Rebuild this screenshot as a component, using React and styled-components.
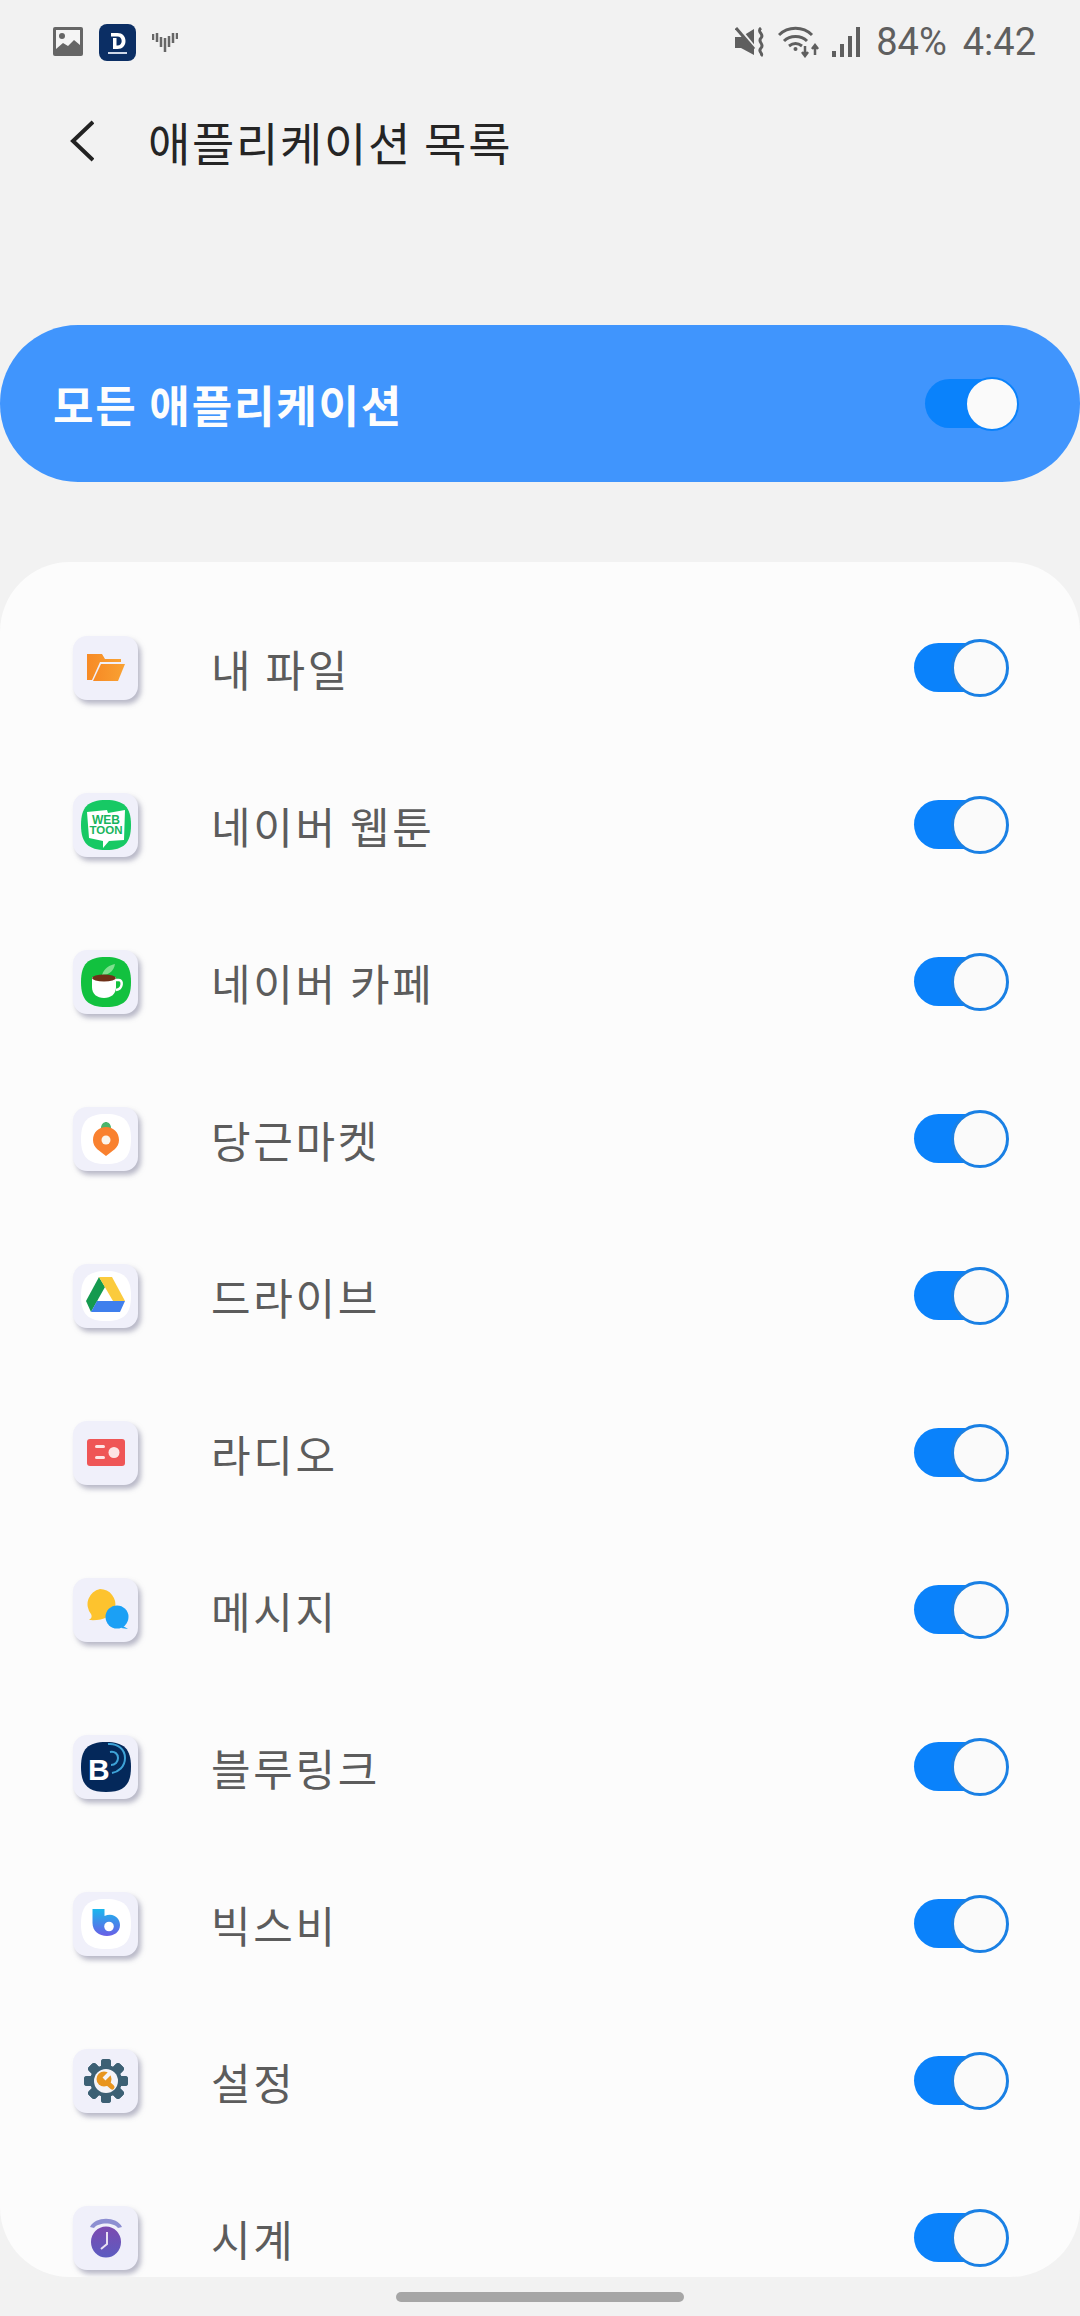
import styled, { createGlobalStyle } from 'styled-components';

const GlobalStyle = createGlobalStyle`
  html, body {
    margin: 0;
    padding: 0;
    background: #f2f2f2;
  }
  * {
    box-sizing: border-box;
  }
`;

const Page = styled.div`
  width: 1080px;
  height: 2316px;
  overflow: hidden;
  background: #f2f2f2;
  font-family: 'Noto Sans CJK KR', 'Noto Sans', sans-serif;
`;

const StatusBar = styled.div`
  height: 84px;
  padding: 0 44px 0 53px;
  display: flex;
  align-items: center;
  justify-content: space-between;
`;

const StatusGroup = styled.div`
  display: flex;
  align-items: center;
  gap: ${(p) => p.$gap || 12}px;
`;

const StatusText = styled.span`
  font-family: Roboto, 'Liberation Sans', sans-serif;
  font-size: 38px;
  line-height: 42px;
  color: #5f5f5f;
  margin-left: ${(p) => p.$left || 0}px;
`;

const Header = styled.div`
  height: 114px;
  padding-left: 70px;
  display: flex;
  align-items: center;
  gap: 54px;
`;

const Title = styled.h1`
  margin: 0;
  font-size: 46px;
  font-weight: 400;
  letter-spacing: 1.7px;
  color: #252525;
`;

const Banner = styled.div`
  margin-top: 127px;
  height: 157px;
  border-radius: 78px;
  background: #4095fd;
  padding: 0 61px 0 53px;
  display: flex;
  align-items: center;
  justify-content: space-between;
`;

const BannerLabel = styled.span`
  font-size: 44px;
  font-weight: 700;
  letter-spacing: 1.8px;
  color: #fdfdfd;
`;

const Card = styled.div`
  margin-top: 80px;
  height: 1715px;
  padding-top: 27px;
  border-radius: 70px;
  background: #fcfcfc;
  overflow: hidden;
`;

const Row = styled.div`
  height: 157px;
  padding: 0 71px 0 73px;
  display: flex;
  align-items: center;
`;

const IconTile = styled.div`
  width: 65px;
  height: 64px;
  flex: none;
  border-radius: 14px;
  background: #f0f0fa;
  box-shadow: 3px 4px 5px rgba(120, 120, 150, 0.5);
  display: flex;
  align-items: center;
  justify-content: center;
`;

const RowLabel = styled.span`
  margin-left: 73px;
  flex: 1;
  font-size: 43px;
  letter-spacing: 2.7px;
  color: #5c5c5c;
`;

const Track = styled.div`
  position: relative;
  width: ${(p) => (p.$small ? 91 : 86)}px;
  height: 49px;
  margin-right: ${(p) => (p.$small ? 3 : 9)}px;
  border-radius: 25px;
  background: #0a82fb;
`;

const Thumb = styled.div`
  position: absolute;
  top: 50%;
  right: ${(p) => (p.$small ? -3 : -9)}px;
  width: ${(p) => (p.$small ? 54 : 58)}px;
  height: ${(p) => (p.$small ? 54 : 58)}px;
  transform: translateY(-50%);
  border-radius: 50%;
  border: ${(p) => (p.$small ? 2 : 3)}px solid ${(p) => (p.$small ? '#0a82fb' : '#1a80e4')};
  background: #fafafa;
`;

const Toggle = ({ small }) => (
  <Track $small={small}>
    <Thumb $small={small} />
  </Track>
);

const HomeBar = styled.div`
  width: 288px;
  height: 10px;
  margin: 15px auto 0;
  border-radius: 5px;
  background: #a6a6a6;
`;

const Squircle = ({ fill, children }) => (
  <svg width="50" height="50" viewBox="0 0 50 50">
    <path d="M25 0C43 0 50 7 50 25S43 50 25 50 0 43 0 25 7 0 25 0Z" fill={fill} />
    {children}
  </svg>
);

const ImageIcon = () => (
  <svg width="30" height="30" viewBox="0 0 30 30">
    <rect x="0" y="0" width="30" height="29" rx="2" fill="#666" />
    <rect x="3" y="3" width="24" height="23" fill="#f5f5f5" />
    <circle cx="9" cy="9" r="3" fill="#666" />
    <path d="M3 22l7-6 5 3 6-6 6 5v9H3Z" fill="#666" />
  </svg>
);

const DIcon = () => (
  <svg width="37" height="37" viewBox="0 0 37 37">
    <rect width="37" height="37" rx="8" fill="#0b2e64" />
    <path
      d="M12 9h6.500c5 0 8 3.500 8 8s-3 8-8 8H14V14h3.500v7.500h1c2.500 0 4.200-2 4.200-4.500s-1.700-4.500-4.200-4.500H12Z"
      fill="#fff"
    />
    <rect x="9" y="28" width="19" height="2" fill="#cfd8e8" />
  </svg>
);

const WaveIcon = () => (
  <svg width="26" height="22" viewBox="0 0 26 22" fill="none" stroke="#666" strokeWidth="2.500">
    <path d="M1 3v6M5 2v9M9 6v10M13 7v14M17 5v11M21 2v10M25 2v6" />
  </svg>
);

const MuteIcon = () => (
  <svg width="31" height="30" viewBox="0 0 31 30">
    <path d="M0 10h6l13-8v26L6 21H0Z" fill="#5f5f5f" />
    <path d="M3 0l17 21" stroke="#f2f2f2" strokeWidth="3" />
    <path d="M1 1l18 21" stroke="#5f5f5f" strokeWidth="3" />
    <path d="M26 1c-5 4 4 6 0 10s4 6 0 10 3 5 0 8" fill="none" stroke="#5f5f5f" strokeWidth="3" />
  </svg>
);

const WifiIcon = () => (
  <svg width="42" height="32" viewBox="0 0 42 32" fill="none" stroke="#5f5f5f" strokeWidth="3">
    <path d="M1 9C10 0 25 0 34 9" />
    <path d="M6 15c6-6 17-6 23 0" />
    <path d="M11 20c4-3 9-3 13 0" />
    <circle cx="17.500" cy="23" r="2" fill="#5f5f5f" stroke="none" />
    <path d="M27 20v9M24 26l3 4 3-4M37 29v-9M34 23l3-4 3 4" strokeWidth="2.500" />
  </svg>
);

const SignalIcon = () => (
  <svg width="28" height="30" viewBox="0 0 28 30" fill="#5f5f5f">
    <rect x="0" y="24" width="4" height="6" />
    <rect x="8" y="17" width="4" height="13" />
    <rect x="16" y="9" width="4" height="21" />
    <rect x="24" y="0" width="4" height="30" />
  </svg>
);

const BackIcon = () => (
  <svg width="24" height="42" viewBox="0 0 24 42" fill="none" stroke="#222" strokeWidth="4">
    <path d="M23 2L3 21l20 19" />
  </svg>
);

const FolderIcon = () => (
  <svg width="40" height="30" viewBox="0 0 40 30">
    <defs>
      <linearGradient id="folderGrad" x1="0" y1="0" x2="1" y2="0">
        <stop offset="0" stopColor="#f78a25" />
        <stop offset="1" stopColor="#f9a233" />
      </linearGradient>
    </defs>
    <path d="M1 1h15l3 5h16v3H14L6 27H1Z" fill="url(#folderGrad)" />
    <path d="M15 11h24l-7 17H7Z" fill="url(#folderGrad)" />
  </svg>
);

const WebtoonIcon = () => (
  <Squircle fill="#17c964">
    <path d="M6 12l20-2 1 3 17-3-1 30-15 1-6 7v-7L8 38Z" fill="#fff" />
    <text x="25" y="24" textAnchor="middle" fontFamily="Liberation Sans" fontWeight="700" fontSize="12" fill="#17b45c">WEB</text>
    <text x="25" y="34" textAnchor="middle" fontFamily="Liberation Sans" fontWeight="700" fontSize="11.500" fill="#17b45c">TOON</text>
  </Squircle>
);

const CafeIcon = () => (
  <Squircle fill="#12c13f">
    <path d="M21 18c2-7 8-10 13-11-1 6-5 11-13 11Z" fill="#7fe08f" />
    <path d="M11 20h24v10c0 7-5 11-12 11S11 37 11 30Z" fill="#fff" />
    <ellipse cx="23" cy="21" rx="12" ry="3.500" fill="#6e3018" />
    <path d="M35 23h3c4 0 4 9-3 10" fill="none" stroke="#fff" strokeWidth="2.500" />
  </Squircle>
);

const CarrotIcon = () => (
  <Squircle fill="#ffffff">
    <path d="M20 14c0-4 3-6 5-6 2 0 5 2 5 6Z" fill="#4bb56b" />
    <path d="M25 13c7.500 0 13 5.500 13 13 0 8-7 11-13 16-6-5-13-8-13-16 0-7.500 5.500-13 13-13Z" fill="#f9812f" />
    <circle cx="25" cy="26" r="4.500" fill="#fbf5ec" />
  </Squircle>
);

const DriveIcon = () => (
  <Squircle fill="#ffffff">
    <path d="M18 6L5 30l5 11 14-25Z" fill="#159a4f" />
    <path d="M18 6h13l13 24H32Z" fill="#fbcb3d" />
    <path d="M16 30h28l-5 11H10Z" fill="#3f7fed" />
  </Squircle>
);

const RadioIcon = () => (
  <svg width="38" height="28" viewBox="0 0 38 28">
    <rect width="38" height="27" rx="3" fill="#ef5656" />
    <rect x="8" y="6" width="10" height="3" rx="1.500" fill="#fde5e5" />
    <rect x="8" y="17" width="10" height="3" rx="1.500" fill="#fde5e5" />
    <circle cx="27" cy="13.500" r="5.500" fill="#fde5e5" />
  </svg>
);

const MessageIcon = () => (
  <svg width="46" height="44" viewBox="0 0 46 44">
    <path d="M17 1a15.500 15.500 0 0 1 15 19c-3 9-13 13-26 12 3-2 3-4 2-6A15.500 15.500 0 0 1 17 1Z" fill="#fdc32e" />
    <circle cx="34" cy="29" r="11.500" fill="#1ba0f5" />
    <path d="M40 38l5 3-7-1Z" fill="#1ba0f5" />
  </svg>
);

const BluelinkIcon = () => (
  <Squircle fill="#04285a">
    <text x="7" y="38" fontFamily="Liberation Sans" fontWeight="700" fontSize="30" fill="#fff">B</text>
    <path d="M29 10c5-1 8 2 8 6s-3 7-7 7" fill="none" stroke="#3ea3d8" strokeWidth="2" />
    <path d="M27 2c9-1 17 5 17 14s-7 14-13 15" fill="none" stroke="#3ea3d8" strokeWidth="2" />
  </Squircle>
);

const BixbyIcon = () => (
  <Squircle fill="#ffffff">
    <defs>
      <linearGradient id="bixbyGrad" x1="0" y1="0" x2="0" y2="1">
        <stop offset="0" stopColor="#1ab8ee" />
        <stop offset="1" stopColor="#6a5ee6" />
      </linearGradient>
    </defs>
    <path d="M11.500 10h12v7C33 13 39 20 39 26c0 7-6 11-13 11-8 0-14.500-5-14.500-13Z" fill="url(#bixbyGrad)" />
    <circle cx="28" cy="27.500" r="4.800" fill="#fff" />
  </Squircle>
);

const GearIcon = () => (
  <svg width="44" height="44" viewBox="0 0 44 44">
    <g fill="#3c6074">
      {[0, 45, 90, 135, 180, 225, 270, 315].map((deg) => (
        <rect key={deg} x="17" y="0" width="10" height="44" rx="3" transform={`rotate(${deg} 22 22)`} />
      ))}
    </g>
    <circle cx="22" cy="22" r="16" fill="#3c6074" />
    <circle cx="22" cy="22" r="12" fill="#f4f4f8" />
    <circle cx="20" cy="20" r="7.500" fill="#e8961f" />
    <path d="M19 20l9 8" stroke="#e8961f" strokeWidth="5" strokeLinecap="round" />
    <path d="M20 20l7-7" stroke="#f4f4f8" strokeWidth="4" />
  </svg>
);

const ClockIcon = () => (
  <svg width="34" height="40" viewBox="0 0 34 40">
    <defs>
      <linearGradient id="clockGrad" x1="0" y1="0" x2="0" y2="1">
        <stop offset="0" stopColor="#7c4ab0" />
        <stop offset="1" stopColor="#5c5cc0" />
      </linearGradient>
    </defs>
    <path d="M1 9C6-2 28-2 33 9l-4 1C25 4 9 4 5 10Z" fill="#8d8fd2" />
    <ellipse cx="17" cy="24" rx="15" ry="15.500" fill="url(#clockGrad)" />
    <path d="M18 14v12l-6 5" fill="none" stroke="#e8dff2" strokeWidth="2" />
  </svg>
);

const apps = [
  { name: '내 파일', Icon: FolderIcon },
  { name: '네이버 웹툰', Icon: WebtoonIcon },
  { name: '네이버 카페', Icon: CafeIcon },
  { name: '당근마켓', Icon: CarrotIcon },
  { name: '드라이브', Icon: DriveIcon },
  { name: '라디오', Icon: RadioIcon },
  { name: '메시지', Icon: MessageIcon },
  { name: '블루링크', Icon: BluelinkIcon },
  { name: '빅스비', Icon: BixbyIcon },
  { name: '설정', Icon: GearIcon },
  { name: '시계', Icon: ClockIcon },
];

const App = () => (
  <Page>
    <GlobalStyle />
    <StatusBar>
      <StatusGroup $gap={16}>
        <ImageIcon />
        <DIcon />
        <WaveIcon />
      </StatusGroup>
      <StatusGroup>
        <MuteIcon />
        <WifiIcon />
        <SignalIcon />
        <StatusText $left={4}>84%</StatusText>
        <StatusText $left={4}>4:42</StatusText>
      </StatusGroup>
    </StatusBar>
    <Header>
      <BackIcon />
      <Title>애플리케이션 목록</Title>
    </Header>
    <Banner>
      <BannerLabel>모든 애플리케이션</BannerLabel>
      <Toggle small />
    </Banner>
    <Card>
      {apps.map(({ name, Icon }) => (
        <Row key={name}>
          <IconTile>
            <Icon />
          </IconTile>
          <RowLabel>{name}</RowLabel>
          <Toggle />
        </Row>
      ))}
    </Card>
    <HomeBar />
  </Page>
);

export default App;
